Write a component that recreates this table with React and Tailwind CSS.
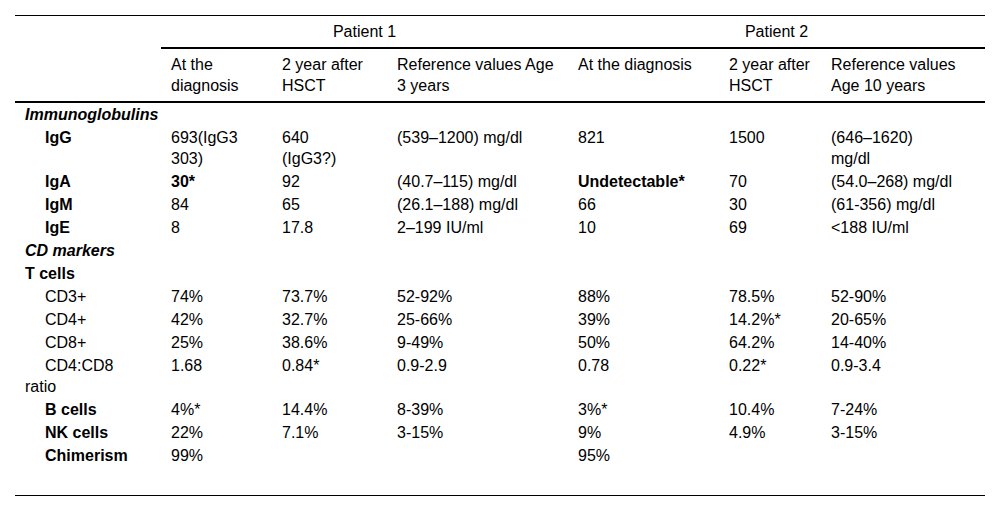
import React from "react";

const rows = [
  { label: "Immunoglobulins", kind: "section" },
  { label: "IgG", kind: "sub-bold", cells: [<>693(IgG3<br />303)</>, <>640<br />(IgG3?)</>, "(539–1200) mg/dl", "821", "1500", <>(646–1620)<br />mg/dl</>] },
  { label: "IgA", kind: "sub-bold", cells: [<b>30*</b>, "92", "(40.7–115) mg/dl", <b>Undetectable*</b>, "70", "(54.0–268) mg/dl"] },
  { label: "IgM", kind: "sub-bold", cells: ["84", "65", "(26.1–188) mg/dl", "66", "30", "(61-356) mg/dl"] },
  { label: "IgE", kind: "sub-bold", cells: ["8", "17.8", "2–199 IU/ml", "10", "69", "<188 IU/ml"] },
  { label: "CD markers", kind: "section" },
  { label: "T cells", kind: "top-bold", cells: ["", "", "", "", "", ""] },
  { label: "CD3+", kind: "sub", cells: ["74%", "73.7%", "52-92%", "88%", "78.5%", "52-90%"] },
  { label: "CD4+", kind: "sub", cells: ["42%", "32.7%", "25-66%", "39%", "14.2%*", "20-65%"] },
  { label: "CD8+", kind: "sub", cells: ["25%", "38.6%", "9-49%", "50%", "64.2%", "14-40%"] },
  { label: "ratio", kind: "ratio", cells: ["1.68", "0.84*", "0.9-2.9", "0.78", "0.22*", "0.9-3.4"] },
  { label: "B cells", kind: "sub-bold", cells: ["4%*", "14.4%", "8-39%", "3%*", "10.4%", "7-24%"] },
  { label: "NK cells", kind: "sub-bold", cells: ["22%", "7.1%", "3-15%", "9%", "4.9%", "3-15%"] },
  { label: "Chimerism", kind: "sub-bold", cells: ["99%", "", "", "95%", "", ""] },
];

const Label = ({ row }) => {
  if (row.kind === "section")
    return <td colSpan={7} className="pl-[10px] py-[1px] font-bold italic">{row.label}</td>;
  if (row.kind === "top-bold")
    return <td className="pl-[10px] py-[1px] font-bold">{row.label}</td>;
  if (row.kind === "sub-bold")
    return <td className="pl-[30px] py-[1px] font-bold">{row.label}</td>;
  if (row.kind === "ratio")
    return (
      <td className="pl-[10px] py-[1px] align-top">
        <span className="pl-[20px]">CD4:CD8</span>
        <br />
        ratio
      </td>
    );
  return <td className="pl-[30px] py-[1px]">{row.label}</td>;
};

export default function App() {
  return (
    <div
      className="w-[1000px] h-[511px] bg-white px-[15px] pt-[15px] text-black text-[16px] leading-[21px]"
      style={{ fontFamily: '"Liberation Sans", Arial, sans-serif' }}
    >
      <div className="border-t border-b border-black pb-[28px]">
        <table className="w-full table-fixed border-separate border-spacing-0">
          <colgroup>
            <col className="w-[146px]" />
            <col className="w-[111px]" />
            <col className="w-[115px]" />
            <col className="w-[181px]" />
            <col className="w-[151px]" />
            <col className="w-[102px]" />
            <col className="w-[164px]" />
          </colgroup>
          <thead>
            <tr>
              <th className="font-normal" />
              <th colSpan={3} className="font-normal py-[5px] text-center border-b-2 border-black">
                Patient 1
              </th>
              <th colSpan={3} className="font-normal py-[5px] text-center border-b-2 border-black">
                Patient 2
              </th>
            </tr>
            <tr className="text-left align-top">
              <th className="font-normal border-b-2 border-black" />
              <th className="font-normal px-[10px] py-[5px] border-b-2 border-black">At the<br />diagnosis</th>
              <th className="font-normal px-[10px] py-[5px] border-b-2 border-black">2 year after<br />HSCT</th>
              <th className="font-normal px-[10px] py-[5px] border-b-2 border-black">Reference values Age<br />3 years</th>
              <th className="font-normal px-[10px] py-[5px] border-b-2 border-black">At the diagnosis</th>
              <th className="font-normal px-[10px] py-[5px] border-b-2 border-black">2 year after<br />HSCT</th>
              <th className="font-normal px-[10px] py-[5px] border-b-2 border-black">Reference values<br />Age 10 years</th>
            </tr>
          </thead>
          <tbody>
            {rows.map((row, i) => (
              <tr key={i} className="align-top">
                <Label row={row} />
                {row.cells &&
                  row.cells.map((c, j) => (
                    <td key={j} className="px-[10px] py-[1px] whitespace-nowrap">
                      {c}
                    </td>
                  ))}
              </tr>
            ))}
          </tbody>
        </table>
      </div>
    </div>
  );
}
